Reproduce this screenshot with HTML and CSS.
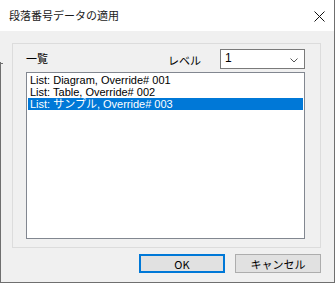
FILE: index.html
```html
<!DOCTYPE html>
<html lang="ja">
<head>
<meta charset="utf-8">
<title>段落番号データの適用</title>
<link rel="stylesheet" href="styles.css">
</head>
<body>
<div class="dialog">
  <div class="titlebar">
    <span class="title">段落番号データの適用</span>
    <svg class="close" width="11" height="11" viewBox="0 0 11 11" aria-hidden="true">
      <path d="M0.5 0.5 L10.5 10.5 M10.5 0.5 L0.5 10.5" stroke="#111" stroke-width="1" fill="none"/>
    </svg>
  </div>
  <div class="content">
    <div class="group">
      <div class="header">
        <span class="label-list">一覧</span>
        <span class="label-level">レベル</span>
        <div class="combo">
          <span class="combo-value">1</span>
          <svg class="chev" width="8" height="5" viewBox="0 0 8 5" aria-hidden="true">
            <path d="M0.5 0.5 L4 4 L7.5 0.5" stroke="#555" stroke-width="1" fill="none"/>
          </svg>
        </div>
      </div>
      <div class="listbox">
        <div class="item">List: Diagram, Override# 001</div>
        <div class="item">List: Table, Override# 002</div>
        <div class="item selected">List: サンプル, Override# 003</div>
      </div>
    </div>
    <div class="buttons">
      <button class="btn default">OK</button>
      <button class="btn">キャンセル</button>
    </div>
  </div>
</div>
</body>
</html>
```
FILE: styles.css
```css
* { box-sizing: border-box; }
html, body { margin: 0; padding: 0; background: #f0f0f0; }
body {
  font-family: "Noto Sans CJK JP", "Noto Sans", sans-serif;
  font-size: 11px;
  color: #000;
}
.dialog {
  width: 335px;
  height: 283px;
  background-color: #f0f0f0;
  background-image: linear-gradient(#6f6f6f, #6f6f6f), linear-gradient(#6f6f6f, #6f6f6f);
  background-size: 1px 220px, 3px 1px;
  background-position: left bottom, 0 63px;
  background-repeat: no-repeat;
  border-right: 1px solid #6f6f6f;
  border-bottom: 1px solid #6f6f6f;
  display: flex;
  flex-direction: column;
}
.titlebar {
  height: 31px;
  background: #fff;
  display: flex;
  align-items: center;
  justify-content: space-between;
  padding: 0 9px 0 9px;
}
.title {
  font-size: 11px;
  line-height: 14px;
  margin-top: -1px;
  color: #1a1a1a;
}
.close { display: block; margin-top: 1px; }
.content {
  flex: 1;
  padding: 12px 13px 0 12px;
  display: flex;
  flex-direction: column;
}
.group {
  height: 205px;
  border: 1px solid #dcdcdc;
  padding: 5px 15px 8px 13px;
  display: flex;
  flex-direction: column;
}
.header {
  display: flex;
  align-items: center;
  height: 20px;
}
.label-list {
  flex: 1;
  line-height: 14px;
  margin-top: -2px;
}
.label-level {
  width: 52px;
  line-height: 14px;
  margin-top: 2px;
}
.combo {
  width: 85px;
  height: 20px;
  border: 1px solid #7a7a7a;
  background: #fff;
  display: flex;
  align-items: center;
  justify-content: space-between;
  padding: 0 6px 0 4px;
}
.combo-value {
  font-family: "Liberation Sans", "Noto Sans CJK JP", sans-serif;
  font-size: 12px;
  line-height: 14px;
  margin-top: -3px;
}
.chev { display: block; margin-top: 3px; }
.listbox {
  margin-top: 3px;
  flex: 1;
  border: 1px solid #828790;
  background: #fff;
  padding: 1px;
}
.item {
  height: 12px;
  line-height: 12px;
  padding-left: 2px;
  white-space: nowrap;
  font-family: "Liberation Sans", "Noto Sans CJK JP", sans-serif;
  font-size: 11px;
}
.item.selected {
  background: #0078d7;
  color: #fff;
}
.buttons {
  margin-top: 6px;
  display: flex;
  justify-content: flex-end;
  gap: 10px;
}
.btn {
  width: 86px;
  height: 19px;
  font-family: "Noto Sans CJK JP", "Noto Sans", sans-serif;
  font-size: 11px;
  line-height: 14px;
  color: #000;
  background: #e1e1e1;
  border: 1px solid #adadad;
  padding: 0;
  margin: 0;
}
.btn.default {
  border: 2px solid #0078d7;
}
```
